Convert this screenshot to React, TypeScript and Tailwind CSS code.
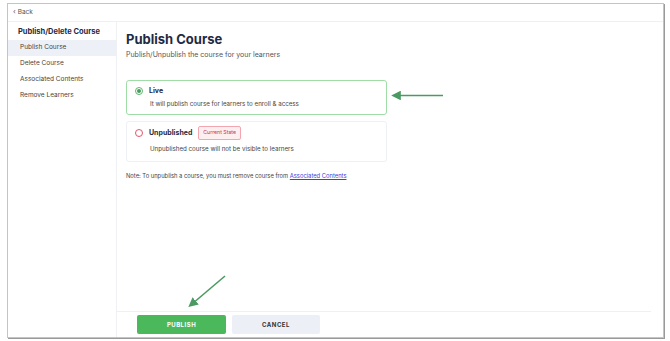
import React from "react";

const FONT = { fontFamily: "Inter, 'Noto Sans', sans-serif" };

const NAV = ["Publish Course", "Delete Course", "Associated Contents", "Remove Learners"];

function Arrow({ x1, y1, x2, y2 }: { x1: number; y1: number; x2: number; y2: number }) {
  return (
    <line
      x1={x1}
      y1={y1}
      x2={x2}
      y2={y2}
      stroke="#4a9a62"
      strokeWidth="1.6"
      markerEnd="url(#head)"
    />
  );
}

export default function App() {
  return (
    <div className="relative h-[341px] w-[670px] bg-white" style={FONT}>
      <div className="absolute left-[7px] top-[3px] flex h-[335px] w-[657px] flex-col border border-[#c4c4c4] bg-white shadow-[1px_1px_0_#9a9a9a]">
        <div className="flex h-[18px] shrink-0 items-center border-b border-[#eef0f4] pl-[5px] text-[6.5px] text-[#555]">
          <span className="mr-[2px] text-[7px]">‹</span>Back
        </div>
        <div className="flex flex-1">
          <aside className="w-[109px] shrink-0 border-r border-[#eef0f4]">
            <div className="px-[10px] pt-[4px] pb-[3px] text-[7.5px] font-bold text-[#1f2a44]">
              Publish/Delete Course
            </div>
            <ul className="text-[6.5px] text-[#444]">
              {NAV.map((n, i) => (
                <li
                  key={n}
                  className={`flex h-[16px] items-center pl-[12px] ${i === 0 ? "bg-[#eef0f7]" : ""}`}
                >
                  {n}
                </li>
              ))}
            </ul>
          </aside>
          <main className="flex flex-1 flex-col">
            <div className="flex-1 pl-[9px] pt-[8px]">
              <h1 className="text-[13px] font-bold leading-[18px] text-[#1f2a44]">Publish Course</h1>
              <p className="mt-[2px] text-[7px] text-[#555]">Publish/Unpublish the course for your learners</p>

              <div className="mt-[19px] w-[261px] rounded-[3px] border border-[#9fdca6] px-[8px] pt-[5px] pb-[6px]">
                <div className="flex items-center gap-[6px]">
                  <span className="flex h-[8px] w-[8px] items-center justify-center rounded-full border border-[#5cb86a]">
                    <span className="h-[4px] w-[4px] rounded-full bg-[#4a9a62]" />
                  </span>
                  <span className="text-[7px] font-bold text-[#1f2a44]">Live</span>
                </div>
                <div className="mt-[3px] pl-[15px] text-[6.2px] text-[#444]">
                  It will publish course for learners to enroll &amp; access
                </div>
              </div>

              <div className="mt-[6px] w-[261px] rounded-[3px] border border-[#eef0f4] px-[8px] pt-[4px] pb-[8px]">
                <div className="flex items-center gap-[6px]">
                  <span className="h-[8px] w-[8px] rounded-full border border-[#e0566a]" />
                  <span className="text-[7px] font-bold text-[#1f2a44]">Unpublished</span>
                  <span className="rounded-[2px] border border-[#f3a6b0] bg-[#fdeef0] px-[4px] py-[2px] text-[5.2px] text-[#c0394f]">
                    Current State
                  </span>
                </div>
                <div className="mt-[4px] pl-[15px] text-[6.2px] text-[#444]">
                  Unpublished course will not be visible to learners
                </div>
              </div>

              <p className="mt-[10px] text-[5.8px] text-[#444]">
                Note: To unpublish a course, you must remove course from{" "}
                <a className="text-[#3b3fe0] underline">Associated Contents</a>
              </p>
            </div>
            <div className="mr-[12px] flex gap-[6px] border-t border-[#eef0f7] pt-[3px] pb-[3px] pl-[20px]">
              <button className="h-[19px] w-[89px] rounded-[2px] bg-[#4cb85c] text-[6px] font-bold tracking-[0.5px] text-white">
                PUBLISH
              </button>
              <button className="h-[19px] w-[88px] rounded-[2px] bg-[#eceff5] text-[6px] font-bold tracking-[0.5px] text-[#333]">
                CANCEL
              </button>
            </div>
          </main>
        </div>
      </div>

      <svg className="pointer-events-none absolute inset-0" width="670" height="341">
        <defs>
          <marker id="head" markerWidth="6" markerHeight="6" refX="3" refY="3" orient="auto">
            <path d="M0,0 L6,3 L0,6 Z" fill="#4a9a62" />
          </marker>
        </defs>
        <Arrow x1={443} y1={95.5} x2={396} y2={95.5} />
        <Arrow x1={225} y1={276} x2={192} y2={304} />
      </svg>
    </div>
  );
}
